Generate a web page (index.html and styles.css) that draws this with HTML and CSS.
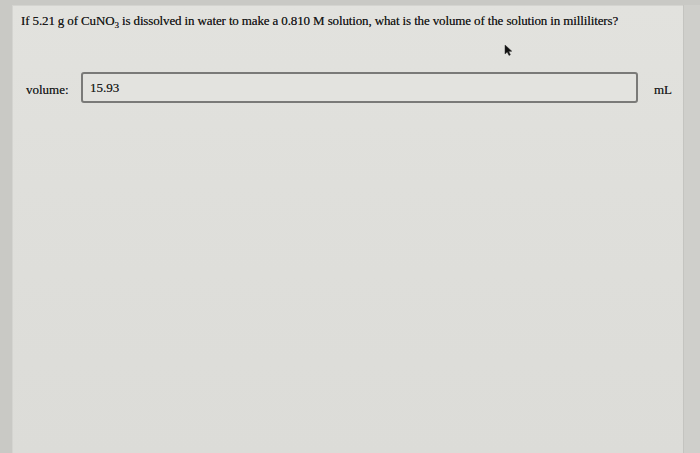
FILE: index.html
```html
<!DOCTYPE html>
<html>
<head>
<meta charset="utf-8">
<link rel="stylesheet" href="styles.css">
</head>
<body>
<div class="screen">
  <div class="panel">
    <p class="question">If 5.21 g of CuNO<sub>3</sub> is dissolved in water to make a 0.810 M solution, what is the volume of the solution in milliliters?</p>
    <div class="cursor-row">
      <svg class="cursor" width="9" height="12" viewBox="0 0 9 12"><path d="M1 1 L1 10 L3.2 8 L5 11.5 L6.4 10.8 L4.7 7.4 L7.8 7.2 Z" fill="#111" stroke="#333" stroke-width="0.5"/></svg>
    </div>
    <div class="answer">
      <span class="label">volume:</span>
      <div class="field">15.93</div>
      <span class="unit">mL</span>
    </div>
  </div>
  <div class="rightstrip"></div>
</div>
</body>
</html>
```
FILE: styles.css
```css
html, body {
  margin: 0;
  padding: 0;
  width: 700px;
  height: 453px;
  overflow: hidden;
  background: #c9c9c5;
}
.screen {
  display: flex;
  height: 453px;
  padding: 5px 0 0 12px;
  box-sizing: border-box;
  font-family: "Liberation Serif", "Times New Roman", serif;
  color: #222;
  text-shadow: 0 0 0.6px rgba(20, 20, 20, 0.7);
}
.panel {
  width: 672px;
  height: 448px;
  background: linear-gradient(180deg, #e2e2de 0%, #dfdfdb 40%, #dcdcd8 100%);
  border-left: 1px solid #d4d4d0;
  border-top: 1px solid #d4d4d0;
  box-sizing: border-box;
  padding: 7px 0 0 8px;
}
.rightstrip {
  width: 16px;
  background: #cfcfcb;
  border-left: 1px solid #c4c4c0;
}
.question {
  margin: 0;
  font-size: 13px;
  line-height: 16px;
  letter-spacing: -0.13px;
  color: #1a1a1a;
}
.question sub {
  font-size: 9px;
  line-height: 0;
  vertical-align: -3px;
}
.cursor-row {
  height: 43px;
  position: relative;
}
.cursor {
  position: absolute;
  left: 483px;
  top: 15px;
}
.answer {
  display: flex;
  align-items: center;
  height: 31px;
}
.label {
  font-size: 13px;
  margin-left: 5px;
  width: 55px;
  padding-top: 5px;
}
.field {
  width: 557px;
  height: 31px;
  box-sizing: border-box;
  border: 2px solid #7a7a78;
  border-radius: 3px;
  background: #e3e3df;
  font-size: 13px;
  line-height: 27px;
  padding-left: 7px;
}
.unit {
  font-size: 13px;
  margin-left: 16px;
  padding-top: 5px;
}
```
